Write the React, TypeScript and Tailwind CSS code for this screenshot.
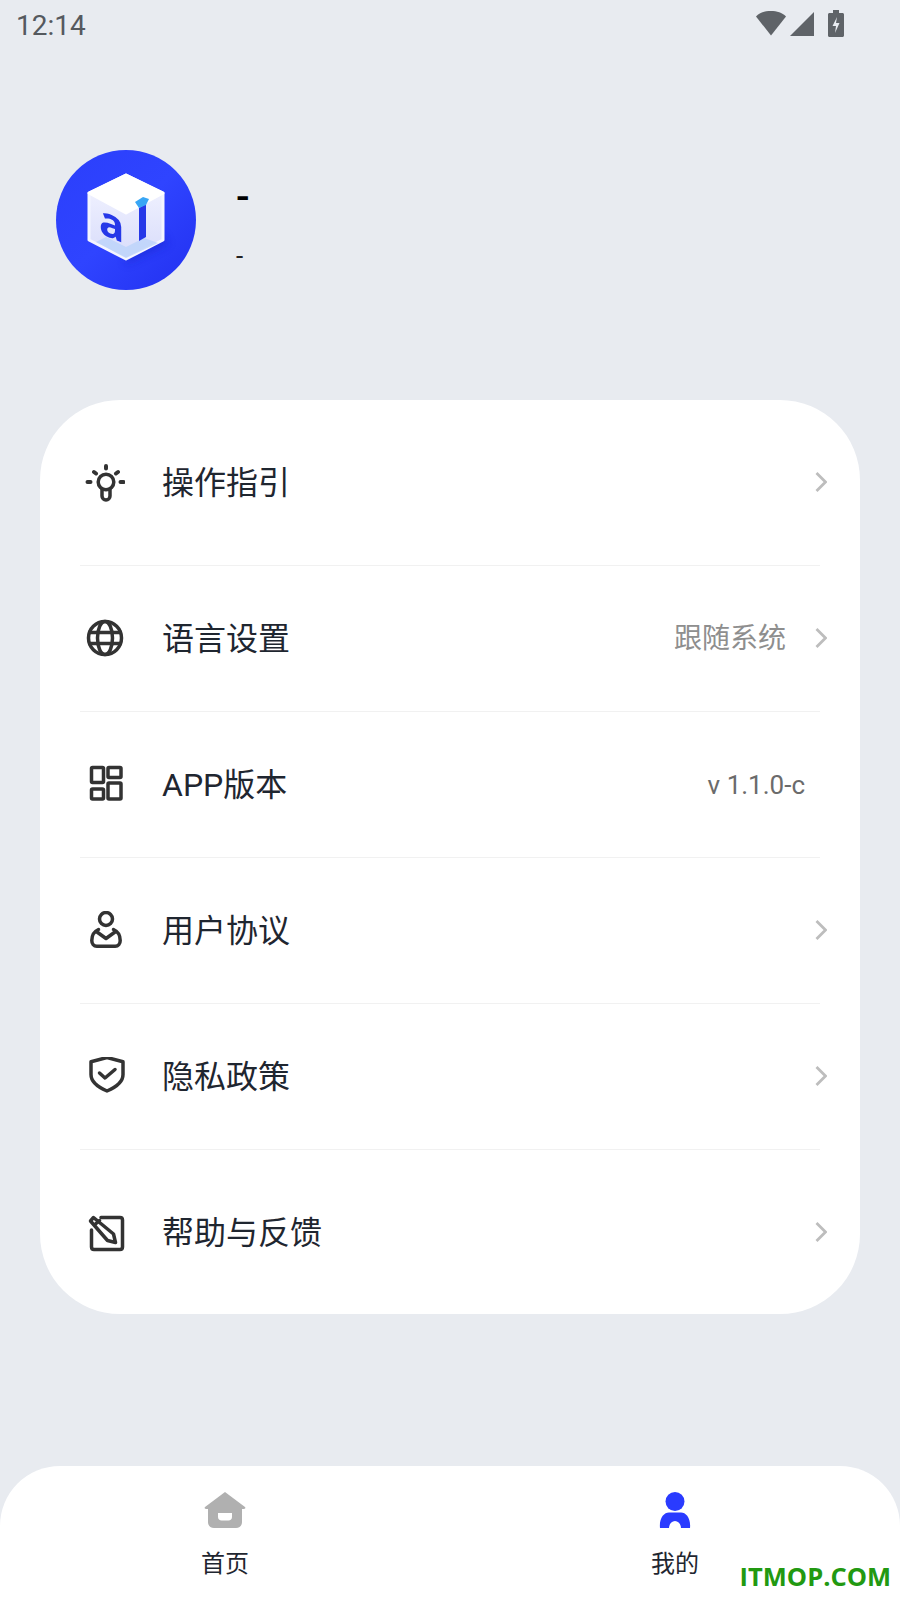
import React from 'react';

const stroke = '#333333';

const BulbIcon = () => (
  <svg width="40" height="40" viewBox="0 0 40 40" fill="none" stroke={stroke} strokeWidth="3.500" strokeLinecap="round" strokeLinejoin="round">
    <circle cx="21" cy="19" r="7.800" />
    <path d="M17 26v7a4 4 0 0 0 8 0v-7" />
    <path d="M21 3v2.500M9 9l2 1.500M33 9l-2 1.500M2.500 19h3M35.500 19h3" strokeWidth="4" />
  </svg>
);

const GlobeIcon = () => (
  <svg width="40" height="40" viewBox="0 0 40 40" fill="none" stroke={stroke} strokeWidth="3.500">
    <circle cx="20" cy="19" r="16.500" />
    <ellipse cx="20" cy="19" rx="7.500" ry="16.500" />
    <path d="M3.500 13.500h33M3.500 24.500h33" />
  </svg>
);

const GridIcon = () => (
  <svg width="40" height="40" viewBox="0 0 40 40" fill="none" stroke={stroke} strokeWidth="3.500" strokeLinejoin="round">
    <rect x="6.500" y="2.500" width="12" height="15" rx="1" />
    <rect x="23" y="2.500" width="13" height="10" rx="1" />
    <rect x="6.500" y="24" width="12" height="10" rx="1" />
    <rect x="23" y="18" width="13" height="16" rx="1" />
  </svg>
);

const UserIcon = () => (
  <svg width="40" height="40" viewBox="0 0 40 40" fill="none" stroke={stroke} strokeWidth="3.500" strokeLinejoin="round" strokeLinecap="round">
    <circle cx="21" cy="8" r="6.500" />
    <path d="M13.500 18.500C9 20.500 6.800 25 6.800 29.500c0 3.500 2 5.800 5 5.800h18.400c3 0 5-2.300 5-5.800 0-4.500-2.200-9-6.700-11" />
    <path d="M12 21l9 6.500 9-6.500" />
  </svg>
);

const ShieldIcon = () => (
  <svg width="40" height="40" viewBox="0 0 40 40" fill="none" stroke={stroke} strokeWidth="3.500" strokeLinejoin="round" strokeLinecap="round">
    <path d="M22 0.500l16 4.200v12.800c0 8-6.500 12.500-16 16.500C12.500 30 6 25.500 6 17.500V4.700z" />
    <path d="M14.500 16l5.500 5 10-8.500" />
  </svg>
);

const NoteIcon = () => (
  <svg width="40" height="40" viewBox="0 0 40 40" fill="none" stroke={stroke} strokeWidth="3.500" strokeLinejoin="round" strokeLinecap="round">
    <path d="M16 4.500h19c1.500 0 2.500 1 2.500 2.500v27c0 1.500-1 2.500-2.500 2.500H9c-1.500 0-2.500-1-2.500-2.500V17" />
    <path d="M8.500 4.500L5.500 8l17 19.500 8 2-2-8.500z" />
    <path d="M10.500 11l4-3.500" />
  </svg>
);

const Chevron = () => (
  <svg width="12" height="20" viewBox="0 0 12 20" fill="none" stroke="#bdbdbd" strokeWidth="2.800" className="-translate-y-px">
    <path d="M1.500 1l9 9-9 9" />
  </svg>
);

// app logo: white cube on a blue disc
const Logo = () => (
  <svg width="140" height="140" viewBox="0 0 140 140">
    <defs>
      <linearGradient id="disc" x1="0" y1="0" x2="1" y2="1">
        <stop offset="0" stopColor="#2b3ffb" />
        <stop offset="0.5" stopColor="#2f44ff" />
        <stop offset="1" stopColor="#2230f0" />
      </linearGradient>
      <linearGradient id="face" x1="0" y1="0" x2="0" y2="1">
        <stop offset="0" stopColor="#f4f5ff" />
        <stop offset="1" stopColor="#d8dcfb" />
      </linearGradient>
      <filter id="soft" x="-20%" y="-20%" width="140%" height="140%">
        <feGaussianBlur stdDeviation="0.500" />
      </filter>
      <filter id="shade" x="-30%" y="-30%" width="160%" height="160%">
        <feGaussianBlur stdDeviation="4" />
      </filter>
    </defs>
    <circle cx="70" cy="70" r="70" fill="url(#disc)" />
    <path d="M70 114l42-20-6-10-36 20z" fill="#1622c8" opacity="0.5" filter="url(#shade)" />
    <g filter="url(#soft)">
      <path d="M70 25l37 18v47l-37 19-37-19V43z" fill="url(#face)" stroke="#f4f5ff" strokeWidth="3" strokeLinejoin="round" />
      <path d="M70 25l37 18-37 20-37-20z" fill="#ffffff" stroke="#ffffff" strokeWidth="3" strokeLinejoin="round" />
      <path d="M40 92l10-5 20 10 18-9 14 5-32 15z" fill="#bcd3fa" opacity="0.8" />
      <text transform="matrix(1 0.42 0 1 43 83)" fontFamily="Open Sans, sans-serif" fontWeight="700" fontSize="42" fill="#2638e8">a</text>
      <path d="M83 58l7-4v33l-7 4z" fill="#2638e8" />
      <path d="M79 52l8-5 6 2-3 6-7 3z" fill="#38a6f5" />
    </g>
  </svg>
);

const items = [
  { icon: <BulbIcon />, label: '操作指引', rowClass: 'h-[165px]' },
  { icon: <GlobeIcon />, label: '语言设置', value: '跟随系统', rowClass: 'h-[145px]' },
  { icon: <GridIcon />, label: 'APP版本', version: 'v 1.1.0-c', rowClass: 'h-[145px]' },
  { icon: <UserIcon />, label: '用户协议', rowClass: 'h-[145px]' },
  { icon: <ShieldIcon />, label: '隐私政策', rowClass: 'h-[145px]' },
  { icon: <NoteIcon />, label: '帮助与反馈', rowClass: 'h-[165px]' },
];

export default function App() {
  return (
    <div className="relative flex h-[1600px] w-[900px] flex-col overflow-hidden bg-[#e8ebf0] font-['Roboto','Noto_Sans_CJK_SC',sans-serif]">
      {/* status bar */}
      <div className="flex h-[50px] items-start justify-between pl-4 pr-[56px]">
        <span className="pt-[9px] text-[28px] leading-[34px] text-[#55595e]">12:14</span>
        <div className="flex items-start pt-[10px]">
          <svg width="32" height="26" viewBox="0 0 32 26" fill="#5f6368">
            <path d="M16 25.500L1 6.500C5 2.500 10 1 16 1s11 1.500 15 5.500z" />
          </svg>
          <svg width="26" height="26" viewBox="0 0 26 26" fill="#5f6368" className="ml-[2px]">
            <path d="M25 2v24H1z" />
          </svg>
          <svg width="16" height="27" viewBox="0 0 16 27" className="ml-[13px]">
            <path d="M5 0h6v3h3.500c.8 0 1.500.7 1.500 1.500V25.500c0 .8-.7 1.500-1.500 1.500h-13C.7 27 0 26.300 0 25.500V4.500C0 3.700.7 3 1.500 3H5z" fill="#5f6368" />
            <path d="M9 7l-4.500 9H8l-1 7 4.500-10H8z" fill="#e8ebf0" />
          </svg>
        </div>
      </div>

      {/* profile */}
      <div className="flex h-[350px] items-start gap-10 pl-[56px] pt-[100px]">
        <Logo />
        <div className="flex flex-col">
          <span className="mt-[26px] text-[40px] font-medium leading-[44px] text-black">-</span>
          <span className="mt-[18px] text-[26px] leading-[36px] text-[#222222]">-</span>
        </div>
      </div>

      {/* menu card */}
      <div className="mx-10 flex h-[914px] flex-col rounded-[80px] bg-white">
        {items.map((item, i) => (
          <React.Fragment key={item.label}>
            {i > 0 && <div className="mx-10 h-px shrink-0 bg-[#f1f1f1]" />}
            <div className={`flex shrink-0 items-center pl-[45px] pr-[33px] ${item.rowClass}`}>
              <div className="h-10 w-10 shrink-0">{item.icon}</div>
              <span className="ml-[37px] text-[32px] leading-[44px] text-[#1f2630]">{item.label}</span>
              <div className="flex-1" />
              {item.value && <span className="mr-[29px] text-[28px] leading-[40px] text-[#8e8e8e]">{item.value}</span>}
              {item.version ? (
                <span className="mr-[22px] text-[26px] leading-[40px] text-[#6b6b6b]">{item.version}</span>
              ) : (
                <Chevron />
              )}
            </div>
          </React.Fragment>
        ))}
      </div>

      <div className="flex-1" />

      {/* bottom nav */}
      <div className="flex h-[134px] rounded-t-[60px] bg-white">
        <div className="flex flex-1 flex-col items-center pt-[26px]">
          <svg width="42" height="36" viewBox="0 0 42 36">
            <path d="M21 0L41 15c.8.8.3 2-1 2h-2v13c0 3.500-2.500 6-6 6H10c-3.500 0-6-2.500-6-6V17H2c-1.300 0-1.800-1.200-1-2z" fill="#b0b0b0" />
            <path d="M14 21h14v4c0 2-1.500 3.500-3.500 3.500h-7c-2 0-3.500-1.500-3.500-3.500z" fill="#ffffff" />
          </svg>
          <span className="mt-[19px] text-[24px] leading-[34px] text-[#1f2630]">首页</span>
        </div>
        <div className="flex flex-1 flex-col items-center pt-[26px]">
          <svg width="32" height="36" viewBox="0 0 32 36" fill="#2a3bff">
            <circle cx="16" cy="9.500" r="9.500" />
            <path d="M1 36C0 26 5 20.500 10 20.500h12c5 0 10 5.500 9 15.500h-9c0-3.500-2.500-7-6-7s-6 3.500-6 7z" />
          </svg>
          <span className="mt-[19px] text-[24px] leading-[34px] text-[#1f2630]">我的</span>
        </div>
      </div>

      {/* watermark */}
      <span className="absolute bottom-[9px] right-[9px] font-['Open_Sans',sans-serif] text-[25.5px] font-bold leading-[30px] text-[#229911]">
        ITMOP.COM
      </span>
    </div>
  );
}
